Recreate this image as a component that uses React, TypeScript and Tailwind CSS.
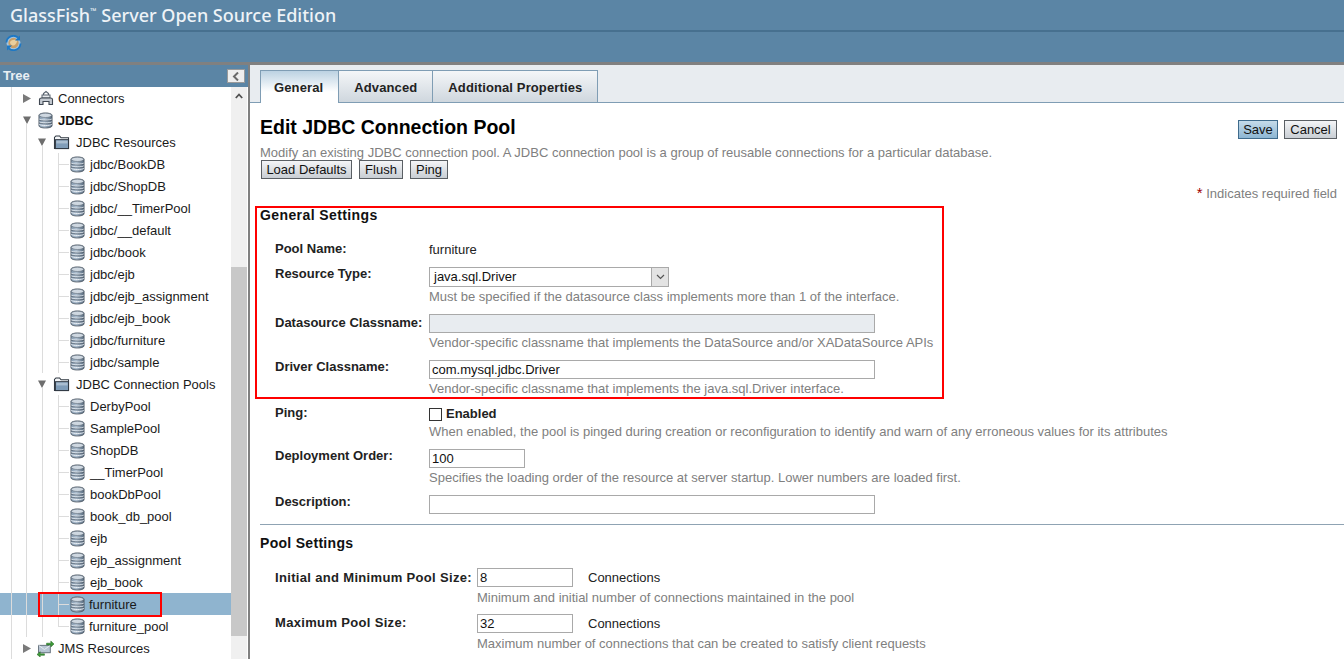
import React from "react";

function Db() {
  return (
    <svg width="15" height="17" viewBox="0 0 16 18" className="shrink-0">
      <defs>
        <linearGradient id="dbg" x1="0" x2="1" y1="0" y2="0">
          <stop offset="0" stopColor="#7f95ab" />
          <stop offset="0.4" stopColor="#aebfd0" />
          <stop offset="1" stopColor="#55697d" />
        </linearGradient>
      </defs>
      <path d="M1 3.500C1 2 4 1 8 1s7 1 7 2.500v11C15 16 12 17 8 17s-7-1-7-2.500z" fill="url(#dbg)" stroke="#4c5661" strokeWidth="0.9" />
      <ellipse cx="8" cy="3.500" rx="6.600" ry="2.300" fill="#cfd8e1" stroke="#66727f" strokeWidth="0.7" />
      <path d="M1.300 7.500C3 9 13 9 14.700 7.500M1.300 10.500C3 12 13 12 14.700 10.500M1.300 13.200C3 14.700 13 14.700 14.700 13.200" fill="none" stroke="#eef2f6" strokeWidth="1" />
      <path d="M1.300 8.400C3 9.900 13 9.900 14.700 8.400M1.300 11.400C3 12.900 13 12.900 14.700 11.400" fill="none" stroke="#4d5966" strokeWidth="0.7" />
    </svg>
  );
}

function Folder() {
  return (
    <svg width="17" height="15" viewBox="0 0 18 16" className="shrink-0">
      <path d="M1.500 14.500V2.500L3 1h4l1.500 2h8v11.500z" fill="#f5f7f9" stroke="#2f3740" strokeWidth="1.100" />
      <rect x="2.500" y="5" width="14" height="9.500" fill="#7f9cb8" stroke="#2f3740" strokeWidth="1.100" />
      <rect x="3.500" y="6" width="12" height="3" fill="#a9bdd0" />
    </svg>
  );
}

function Connector() {
  return (
    <svg width="16" height="16" viewBox="0 0 16 16" className="shrink-0">
      <path d="M5.500 5V3.500L8 1.500l2.500 2V5" fill="none" stroke="#5b6570" strokeWidth="1.200" />
      <rect x="4" y="5" width="8" height="3" fill="#e6e9ec" stroke="#59636e" strokeWidth="1" />
      <path d="M1.500 14.500V9.500C1.500 8.500 2.500 8 3.500 8h9c1 0 2 .5 2 1.500v5h-3.500v-3h-6v3z" fill="#c4cad1" stroke="#3f4751" strokeWidth="1.100" />
    </svg>
  );
}

function Jms() {
  return (
    <svg width="17" height="17" viewBox="0 0 16 16" className="shrink-0">
      <rect x="1.500" y="5" width="11" height="7" fill="#b8c6d4" stroke="#56636f" strokeWidth="0.8" />
      <path d="M1.500 5l5.500 4 5.500-4" fill="none" stroke="#eef2f6" strokeWidth="0.8" />
      <path d="M9 3h4V1l3 2.800-3 2.700V4.600H9z" fill="#3f9a3a" stroke="#22681f" strokeWidth="0.5" />
      <path d="M7 13H3v-2L0 13.600 3 16v-1.600h4z" fill="#3f9a3a" stroke="#22681f" strokeWidth="0.5" />
    </svg>
  );
}

function Refresh() {
  return (
    <svg width="17" height="16" viewBox="0 0 17 16">
      <circle cx="8.500" cy="8" r="7" fill="#9fc6e6" />
      <circle cx="8.500" cy="8" r="5.200" fill="#c99f68" />
      <path d="M5 7c1.500-2.200 5-2.800 7-1.300 0 2.400-2.200 4.800-4 4.800-1.500 0-3-1.500-3-3.500z" fill="#e9cf9e" />
      <path d="M1.500 7.500A7 7 0 0 1 13 2.500" fill="none" stroke="#1e78c4" strokeWidth="1.800" />
      <path d="M15.500 8.500A7 7 0 0 1 4 13.500" fill="none" stroke="#1e78c4" strokeWidth="1.800" />
      <path d="M15 .5v5h-5zM2 15.500v-5h5z" fill="#1e78c4" />
    </svg>
  );
}

function Arrow({ open }: { open: boolean }) {
  return open ? (
    <svg width="8" height="8" viewBox="0 0 8 8" className="shrink-0"><path d="M0 .5h8L4 8z" fill="#6e6e6e" /></svg>
  ) : (
    <svg width="8" height="9" viewBox="0 0 8 9" className="shrink-0"><path d="M0 0l8 4.500L0 9z" fill="#7a7a7a" /></svg>
  );
}

const Guides = ({ xs }: { xs: number[] }) => (
  <>
    {xs.map((x) => (
      <span key={x} className="absolute top-0 bottom-0 w-px bg-[#dcdcdc]" style={{ left: x }} />
    ))}
  </>
);

const TreeText = ({ children, ml, bold = false }: { children: React.ReactNode; ml: string; bold?: boolean }) => (
  <span className={`${ml} mt-[1px] text-[13px] leading-[22px] ${bold ? "font-bold text-[#111111]" : "text-[#1a1a1a]"}`}>{children}</span>
);

const Leaf = ({ label, selected = false, last = false }: { label: string; selected?: boolean; last?: boolean }) => (
  <div className={`relative flex h-[22px] items-center pl-[70px] ${selected ? "bg-[#8fb4cf]" : ""}`}>
    <Guides xs={[11, 26, 42]} />
    <span className={`absolute left-[58px] top-0 w-px bg-[#dcdcdc] ${last ? "h-[11px]" : "h-[22px]"}`} />
    <span className="absolute left-[58px] top-[11px] h-px w-[11px] bg-[#dcdcdc]" />
    <Db />
    <TreeText ml={selected || last ? "ml-[4px]" : "ml-[5px]"}>{label}</TreeText>
  </div>
);

const Branch = ({ label }: { label: string }) => (
  <div className="relative flex h-[22px] items-center pl-[38px]">
    <Guides xs={[11, 26]} />
    <span className="absolute left-[42px] top-[15px] bottom-0 w-px bg-[#dcdcdc]" />
    <Arrow open />
    <span className="ml-[7px]"><Folder /></span>
    <TreeText ml="ml-[6px]">{label}</TreeText>
  </div>
);

const resources = ["jdbc/BookDB", "jdbc/ShopDB", "jdbc/__TimerPool", "jdbc/__default", "jdbc/book", "jdbc/ejb", "jdbc/ejb_assignment", "jdbc/ejb_book", "jdbc/furniture", "jdbc/sample"];
const pools = ["DerbyPool", "SamplePool", "ShopDB", "__TimerPool", "bookDbPool", "book_db_pool", "ejb", "ejb_assignment", "ejb_book"];

const Help = ({ children }: { children: React.ReactNode }) => (
  <div className="h-[14px] text-[13px] leading-[14px] text-[#808080]">{children}</div>
);

const Label = ({ children, w = "w-[154px]", pt = "pt-0" }: { children: React.ReactNode; w?: string; pt?: string }) => (
  <div className={`${w} ${pt} shrink-0 whitespace-nowrap text-[13px] font-bold leading-[14px] text-[#222222]`}>{children}</div>
);

const Text = ({ value = "", w, disabled = false }: { value?: string; w: string; disabled?: boolean }) => (
  <div className={`${w} h-[19px] border border-[#a9a9a9] px-[2px] text-[13px] leading-[18px] text-[#111111] ${disabled ? "bg-[#e8ecf0]" : "bg-white"}`}>{value}</div>
);

const Btn = ({ children, primary = false, w = "px-[5px]" }: { children: React.ReactNode; primary?: boolean; w?: string }) => (
  <div
    className={`flex h-[19px] items-center justify-center border text-[13px] text-[#111111] ${w} ${
      primary
        ? "border-[#3f6b8c] bg-gradient-to-b from-[#c5dbea] to-[#8db6d3]"
        : "border-[#5a5f64] bg-gradient-to-b from-[#f4f5f7] to-[#c9ced4]"
    }`}
  >
    {children}
  </div>
);

const Tab = ({ label, active = false }: { label: string; active?: boolean }) => (
  <div
    className={`flex items-center border-t border-r border-[#7f9db4] pt-[2px] text-[13px] font-bold tracking-[0.12px] text-[#222222] ${
      active
        ? "-mb-px h-[33px] border-l bg-gradient-to-b from-[#bcd2e2] to-white to-[65%] pl-[13px] pr-[15px]"
        : "h-[32px] bg-gradient-to-b from-[#f4f6f8] to-[#cfd7de] px-[15px]"
    }`}
  >
    {label}
  </div>
);

export default function App() {
  return (
    <div className="relative flex h-[659px] w-[1344px] flex-col overflow-hidden bg-white font-['Liberation_Sans',Arial,sans-serif]">
      <div className="flex h-[30px] shrink-0 items-center bg-[#5b85a5] pl-[10px] font-['Noto_Sans',sans-serif] text-[18px] font-medium text-[#eef3f7]">
        <span>GlassFish</span>
        <span className="mb-[8px] mr-[5px] text-[8px] leading-[8px]">™</span>
        <span>Server Open Source Edition</span>
      </div>
      <div className="h-[2px] shrink-0 bg-[#47708f]" />
      <div className="flex h-[30px] shrink-0 items-start bg-[#5b85a5] pl-[5px] pt-[3px]">
        <Refresh />
      </div>
      <div className="h-[3px] shrink-0 bg-[#808080]" />

      <div className="flex min-h-0 flex-1">
        <aside className="flex w-[248px] shrink-0 flex-col">
          <div className="flex h-[22px] shrink-0 items-center justify-between bg-[#5b85a5] pl-[3px] pr-[3px] text-[13px] font-bold text-[#e9eff4]">
            <span>Tree</span>
            <span className="flex h-[14px] w-[18px] items-center justify-center border border-[#9a9a9a] bg-[#eeeeee]">
              <svg width="8" height="9" viewBox="0 0 8 9"><path d="M6 .5 2 4.500l4 4" fill="none" stroke="#6a6a6a" strokeWidth="2" /></svg>
            </span>
          </div>
          <div className="flex min-h-0 flex-1">
            <div className="w-[231px] shrink-0">
              <div className="relative flex h-[22px] items-center pl-[23px]">
                <Guides xs={[11]} />
                <Arrow open={false} />
                <span className="ml-[7px]"><Connector /></span>
                <TreeText ml="ml-[4px]">Connectors</TreeText>
              </div>
              <div className="relative flex h-[22px] items-center pl-[23px]">
                <Guides xs={[11]} />
                <span className="absolute left-[26px] top-[15px] bottom-0 w-px bg-[#dcdcdc]" />
                <Arrow open />
                <span className="ml-[7px]"><Db /></span>
                <TreeText ml="ml-[5px]" bold>JDBC</TreeText>
              </div>
              <Branch label="JDBC Resources" />
              {resources.map((r) => <Leaf key={r} label={r} />)}
              <Branch label="JDBC Connection Pools" />
              {pools.map((r) => <Leaf key={r} label={r} />)}
              <Leaf label="furniture" selected />
              <Leaf label="furniture_pool" last />
              <div className="relative flex h-[22px] items-center pl-[23px]">
                <Guides xs={[11]} />
                <Arrow open={false} />
                <span className="ml-[6px]"><Jms /></span>
                <TreeText ml="ml-[4px]">JMS Resources</TreeText>
              </div>
            </div>
            <div className="flex w-[16px] shrink-0 flex-col bg-[#f0f0f0]">
              <div className="flex h-[17px] items-center justify-center">
                <svg width="8" height="6" viewBox="0 0 8 6"><path d="M.8 5 4 1.500 7.200 5" fill="none" stroke="#505050" strokeWidth="1.800" /></svg>
              </div>
              <div className="mt-[163px] h-[369px] bg-[#c8c8c8]" />
            </div>
          </div>
        </aside>
        <div className="w-[2px] shrink-0 bg-[#808080]" />

        <main className="min-w-0 flex-1">
          <div className="flex h-[38px] items-end border-b border-[#7f9db4] bg-[#e8ecf0] pl-[10px]">
            <Tab label="General" active />
            <Tab label="Advanced" />
            <Tab label="Additional Properties" />
          </div>
          <div className="relative pl-[10px]">
            <div className="flex items-start justify-between pr-[7px]">
              <h1 className="pt-[12px] text-[19.5px] font-bold leading-[24px] text-[#000000]">Edit JDBC Connection Pool</h1>
              <div className="flex gap-[6px] pt-[17px]">
                <Btn primary w="w-[40px]">Save</Btn>
                <Btn w="w-[53px]">Cancel</Btn>
              </div>
            </div>
            <div className="mt-[7px] h-[14px] text-[13px] leading-[14px] text-[#808080]">
              Modify an existing JDBC connection pool. A JDBC connection pool is a group of reusable connections for a particular database.
            </div>
            <div className="flex gap-[7px] pl-px">
              <Btn w="w-[91px]">Load Defaults</Btn>
              <Btn w="w-[44px]">Flush</Btn>
              <Btn w="w-[38px]">Ping</Btn>
            </div>
            <div className="mt-[6px] pr-[7px] text-right text-[13px] leading-[16px] text-[#808080]">
              <span className="text-[15px] text-[#a00000]">*</span> Indicates required field
            </div>
            <h2 className="mt-[5px] text-[14px] font-bold leading-[16px] tracking-[0.4px] text-[#111111]">General Settings</h2>

            <div className="pl-[15px]">
              <div className="mt-[19px] flex h-[15px] items-center">
                <Label pt="mb-[2px]">Pool Name:</Label>
                <span className="text-[13px] text-[#222222]">furniture</span>
              </div>
              <div className="mt-[10px] flex">
                <Label>Resource Type:</Label>
                <div>
                  <div className="flex h-[20px] w-[240px] items-center justify-between border border-[#a9a9a9] bg-white pl-[4px] text-[13px] text-[#111111]">
                    java.sql.Driver
                    <span className="flex h-[18px] w-[17px] items-center justify-center border-l border-[#a9a9a9] bg-[#e3e3e3]">
                      <svg width="9" height="6" viewBox="0 0 9 6"><path d="M1 1l3.500 3.500L8 1" fill="none" stroke="#555555" strokeWidth="1.200" /></svg>
                    </span>
                  </div>
                  <div className="mt-[3px]"><Help>Must be specified if the datasource class implements more than 1 of the interface.</Help></div>
                </div>
              </div>
              <div className="mt-[10px] flex">
                <Label pt="pt-[2px]">Datasource Classname:</Label>
                <div>
                  <Text w="w-[446px]" disabled />
                  <div className="mt-[3px]"><Help>Vendor-specific classname that implements the DataSource and/or XADataSource APIs</Help></div>
                </div>
              </div>
              <div className="mt-[10px] flex">
                <Label>Driver Classname:</Label>
                <div>
                  <Text w="w-[446px]" value="com.mysql.jdbc.Driver" />
                  <div className="mt-[3px]"><Help>Vendor-specific classname that implements the java.sql.Driver interface.</Help></div>
                </div>
              </div>
              <div className="mt-[10px] flex">
                <Label>Ping:</Label>
                <div>
                  <div className="mt-[1px] flex h-[14px] items-center">
                    <span className="mr-[4px] h-[13px] w-[13px] border border-[#333333] bg-white" />
                    <span className="text-[13px] font-bold text-[#222222]">Enabled</span>
                  </div>
                  <div className="mt-[4px]"><Help>When enabled, the pool is pinged during creation or reconfiguration to identify and warn of any erroneous values for its attributes</Help></div>
                </div>
              </div>
              <div className="mt-[10px] flex">
                <Label>Deployment Order:</Label>
                <div>
                  <Text w="w-[96px]" value="100" />
                  <div className="mt-[3px]"><Help>Specifies the loading order of the resource at server startup. Lower numbers are loaded first.</Help></div>
                </div>
              </div>
              <div className="mt-[10px] flex">
                <Label>Description:</Label>
                <Text w="w-[446px]" />
              </div>
            </div>
            <hr className="mt-[10px] border-t border-[#8fa3b3]" />
            <h2 className="mt-[10px] text-[14px] font-bold leading-[16px] tracking-[0.3px] text-[#111111]">Pool Settings</h2>
            <div className="pl-[15px]">
              <div className="mt-[17px] flex">
                <Label w="w-[202px] tracking-[0.33px]" pt="pt-[3px]">Initial and Minimum Pool Size:</Label>
                <div>
                  <div className="flex items-center">
                    <Text w="w-[96px]" value="8" />
                    <span className="ml-[15px] text-[13px] leading-[15px] text-[#222222]">Connections</span>
                  </div>
                  <div className="mt-[4px]"><Help>Minimum and initial number of connections maintained in the pool</Help></div>
                </div>
              </div>
              <div className="mt-[9px] flex">
                <Label w="w-[202px] tracking-[0.33px]" pt="pt-[2px]">Maximum Pool Size:</Label>
                <div>
                  <div className="flex items-center">
                    <Text w="w-[96px]" value="32" />
                    <span className="ml-[15px] text-[13px] leading-[15px] text-[#222222]">Connections</span>
                  </div>
                  <div className="mt-[4px]"><Help>Maximum number of connections that can be created to satisfy client requests</Help></div>
                </div>
              </div>
            </div>
          </div>
        </main>
      </div>

      <div className="absolute left-[255px] top-[206px] h-[193px] w-[689px] border-2 border-[#ff0000]" />
      <div className="absolute left-[38px] top-[592px] h-[25px] w-[124px] border-2 border-[#ff0000]" />
    </div>
  );
}
